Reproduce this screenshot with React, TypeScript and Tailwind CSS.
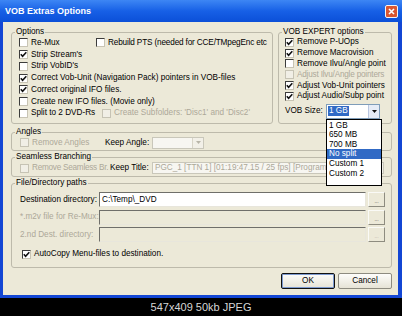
import React from "react";

type CheckProps = {
  label: string;
  checked?: boolean;
  disabled?: boolean;
  className?: string;
  textClass?: string;
};

function Box({ checked, disabled }: { checked?: boolean; disabled?: boolean }) {
  return (
    <span
      className={`flex h-[9px] w-[9px] shrink-0 items-center justify-center border ${
        disabled
          ? "border-[#c6c3b4] bg-[#f1efe6]"
          : "border-t-[#3c3c3c] border-l-[#3c3c3c] border-r-[#c8c4b4] border-b-[#c8c4b4] bg-white"
      }`}
    >
      {checked && (
        <svg viewBox="0 0 7 7" className="h-[7px] w-[7px]">
          <path d="M0.8 3.2 L2.6 5.2 L6.3 1.2" fill="none" stroke="#111" strokeWidth="1.6" />
        </svg>
      )}
    </span>
  );
}

function Check({ label, checked, disabled, className = "", textClass = "" }: CheckProps) {
  return (
    <div className={`flex shrink-0 items-center gap-[3px] whitespace-nowrap ${className}`}>
      <Box checked={checked} disabled={disabled} />
      <span className={`${disabled ? "text-[#aca899]" : ""} ${textClass}`}>{label}</span>
    </div>
  );
}

function Group({
  title,
  className = "",
  children,
}: {
  title: string;
  className?: string;
  children: React.ReactNode;
}) {
  return (
    <fieldset className={`min-w-0 shrink-0 rounded-[3px] border border-[#bdbaab] p-0 ${className}`}>
      <legend className="ml-[3px] px-[1px] leading-[10px]">{title}</legend>
      {children}
    </fieldset>
  );
}

function Arrow({ disabled }: { disabled?: boolean }) {
  return (
    <span
      className={`flex w-[11px] shrink-0 items-center justify-center border-l ${
        disabled ? "border-[#d8d5c8] bg-[#f2f0e8]" : "border-[#b9c6e0] bg-[#e6ecf7]"
      }`}
    >
      <svg viewBox="0 0 5 3" className="h-[3px] w-[5px]">
        <path d="M0 0 H5 L2.5 3 Z" fill={disabled ? "#b8b5a8" : "#111"} />
      </svg>
    </span>
  );
}

function Field({
  className = "",
  disabled,
  children,
}: {
  className?: string;
  disabled?: boolean;
  children?: React.ReactNode;
}) {
  return (
    <div
      className={`flex shrink-0 items-center overflow-hidden whitespace-nowrap border border-t-[#6f6f6a] border-l-[#6f6f6a] border-r-[#e8e6dc] border-b-[#e8e6dc] px-[2px] ${
        disabled ? "bg-[#ece9d8] text-[#aca899]" : "bg-white"
      } ${className}`}
    >
      {children}
    </div>
  );
}

function Browse({ disabled }: { disabled?: boolean }) {
  return (
    <div
      className={`flex h-[15px] w-[17px] shrink-0 items-end justify-center border border-t-[#fafaf6] border-l-[#fafaf6] border-r-[#8e8c80] border-b-[#8e8c80] bg-[#ece9d8] pb-[2px] text-[5px] leading-[5px] ${
        disabled ? "text-[#aca899]" : "text-[#333]"
      }`}
    >
      ...
    </div>
  );
}

const sizes = ["1 GB", "650 MB", "700 MB", "No split", "Custom 1", "Custom 2"];

export default function App() {
  return (
    <div className="flex h-[316px] w-[402px] flex-col overflow-hidden bg-black font-['Liberation_Sans',Arial,sans-serif] text-[8.2px] leading-[10px] text-black">
      <div className="flex h-[298px] w-[402px] flex-col overflow-hidden bg-[#1346d4]">
        <div className="flex h-[22px] shrink-0 items-center justify-between bg-linear-to-b from-[#3d86f4] via-[#1760e6] to-[#0b4fd8] pl-[5px] pr-[4px]">
          <span className="text-[9px] font-bold leading-[10px] text-white">VOB Extras Options</span>
          <div className="flex h-[13px] w-[13px] shrink-0 items-center justify-center rounded-[2px] border border-[#f4f4f4] bg-[#db5630]">
            <svg viewBox="0 0 7 7" className="h-[7px] w-[7px]">
              <path d="M1 1 L6 6 M6 1 L1 6" stroke="white" strokeWidth="1.6" />
            </svg>
          </div>
        </div>

        <div className="mb-[3px] ml-[3px] mr-[4px] flex min-w-0 flex-1 flex-col bg-[#ece9d8] pl-[8px] pr-[6px] pt-[5px]">
          <div className="flex gap-[5px]">
            <Group title="Options" className="h-[97px] w-[262px]">
              <div className="flex flex-col overflow-hidden px-[7px]">
                <div className="flex h-[11.75px] items-center">
                  <Check label="Re-Mux" className="w-[77px]" />
                  <Check
                    label="Rebuild PTS (needed for CCE/TMpegEnc etc"
                    textClass="tracking-[-0.15px]"
                  />
                </div>
                <Check label="Strip Stream's" checked className="h-[11.75px]" />
                <Check label="Strip VobID's" className="h-[11.75px]" />
                <Check
                  label="Correct Vob-Unit (Navigation Pack) pointers in VOB-files"
                  checked
                  className="h-[11.75px]"
                />
                <Check label="Correct original IFO files." checked className="h-[11.75px]" />
                <Check label="Create new IFO files. (Movie only)" className="h-[11.75px]" />
                <div className="flex h-[11.75px] items-center">
                  <Check label="Split to 2 DVD-Rs" className="w-[83px]" />
                  <Check label="Create Subfolders: 'Disc1' and 'Disc2'" disabled />
                </div>
              </div>
            </Group>

            <Group title="VOB EXPERT options" className="h-[97px] w-[114px]">
              <div className="flex flex-col overflow-hidden px-[6px]">
                <Check label="Remove P-UOps" checked className="h-[10.8px]" />
                <Check label="Remove Macrovision" checked className="h-[10.8px]" />
                <Check label="Remove Ilvu/Angle point" className="h-[10.8px]" />
                <Check
                  label="Adjust Ilvu/Angle pointers"
                  disabled
                  className="h-[10.8px]"
                  textClass="tracking-[-0.2px]"
                />
                <Check label="Adjust Vob-Unit pointers" checked className="h-[10.8px]" />
                <Check label="Adjust Audio/Subp point" checked className="h-[10.8px]" />
              </div>
              <div className="mt-[2px] flex items-center px-[6px]">
                <span className="w-[41px] shrink-0">VOB Size:</span>
                <div className="relative">
                  <div className="flex h-[15px] w-[54px] border border-[#7f9db9] bg-white">
                    <div className="flex flex-1 items-center pl-[1px]">
                      <span className="bg-[#316ac5] px-[1px] text-white">1 GB</span>
                    </div>
                    <Arrow />
                  </div>
                  <div className="absolute left-0 top-full z-10 flex h-[67px] w-[56px] flex-col border border-black bg-white pt-[0.5px]">
                    {sizes.map((s) => (
                      <div
                        key={s}
                        className={`flex h-[9.6px] items-center pl-[2px] leading-[9px] ${
                          s === "No split" ? "bg-[#316ac5] text-white" : ""
                        }`}
                      >
                        {s}
                      </div>
                    ))}
                  </div>
                </div>
              </div>
            </Group>
          </div>

          <Group title="Angles" className="mt-[3px] h-[24px]">
            <div className="flex h-[11px] items-center pl-[8px]">
              <Check label="Remove Angles" disabled className="w-[85px]" />
              <span className="w-[47px] shrink-0">Keep Angle:</span>
              <div className="flex h-[12px] w-[52px] shrink-0 border border-[#c9c7ba] bg-[#f7f6f1]">
                <div className="flex-1" />
                <Arrow disabled />
              </div>
            </div>
          </Group>

          <Group title="Seamless Branching" className="mt-[1px] h-[25px]">
            <div className="flex h-[12px] items-center pl-[8px]">
              <Check
                label="Remove Seamless Br."
                disabled
                className="w-[90px] overflow-hidden"
                textClass="tracking-[-0.25px]"
              />
              <span className="w-[42px] shrink-0">Keep Title:</span>
              <div className="flex h-[12px] w-[232px] shrink-0 border border-[#c9c7ba] bg-[#f7f6f1]">
                <div className="flex flex-1 items-center overflow-hidden whitespace-nowrap pl-[2px] text-[#aca899]">
                  PGC_1 [TTN 1] [01:19:47.15 / 25 fps] [Programs
                </div>
                <Arrow disabled />
              </div>
            </div>
          </Group>

          <Group title="File/Directory paths" className="mt-[1px] h-[90px]">
            <div className="flex flex-col gap-[2.5px] pl-[8px] pt-[4px]">
              <div className="flex h-[15px] items-center">
                <span className="w-[79px] shrink-0">Destination directory:</span>
                <Field className="h-[15px] w-[267px]">C:\Temp\_DVD</Field>
                <div className="ml-[2px]">
                  <Browse />
                </div>
              </div>
              <div className="flex h-[15px] items-center">
                <span className="w-[79px] shrink-0 text-[#aca899]">*.m2v file for Re-Mux:</span>
                <Field disabled className="h-[15px] w-[267px]" />
                <div className="ml-[2px]">
                  <Browse />
                </div>
              </div>
              <div className="flex h-[15px] items-center">
                <span className="w-[79px] shrink-0 text-[#aca899]">2.nd Dest. directory:</span>
                <Field disabled className="h-[15px] w-[267px]" />
                <div className="ml-[2px]">
                  <Browse disabled />
                </div>
              </div>
              <Check
                label="AutoCopy Menu-files to destination."
                checked
                className="ml-[2px] mt-[4.5px] h-[10px]"
              />
            </div>
          </Group>

          <div className="mt-[5px] flex justify-end gap-[3px]">
            <button className="flex h-[16px] w-[54px] items-center justify-center rounded-[2px] border border-[#111] bg-linear-to-b from-[#fdfdfb] to-[#e6e3d6] shadow-[inset_0_0_0_1px_#7e9bd0]">
              OK
            </button>
            <button className="flex h-[16px] w-[54px] items-center justify-center rounded-[2px] border border-[#8d8b80] bg-linear-to-b from-[#fdfdfb] to-[#e6e3d6]">
              Cancel
            </button>
          </div>
        </div>
      </div>
      <div className="flex flex-1 items-center justify-center text-[11px] leading-[12px] text-[#d6d6d6]">
        547x409 50kb JPEG
      </div>
    </div>
  );
}
